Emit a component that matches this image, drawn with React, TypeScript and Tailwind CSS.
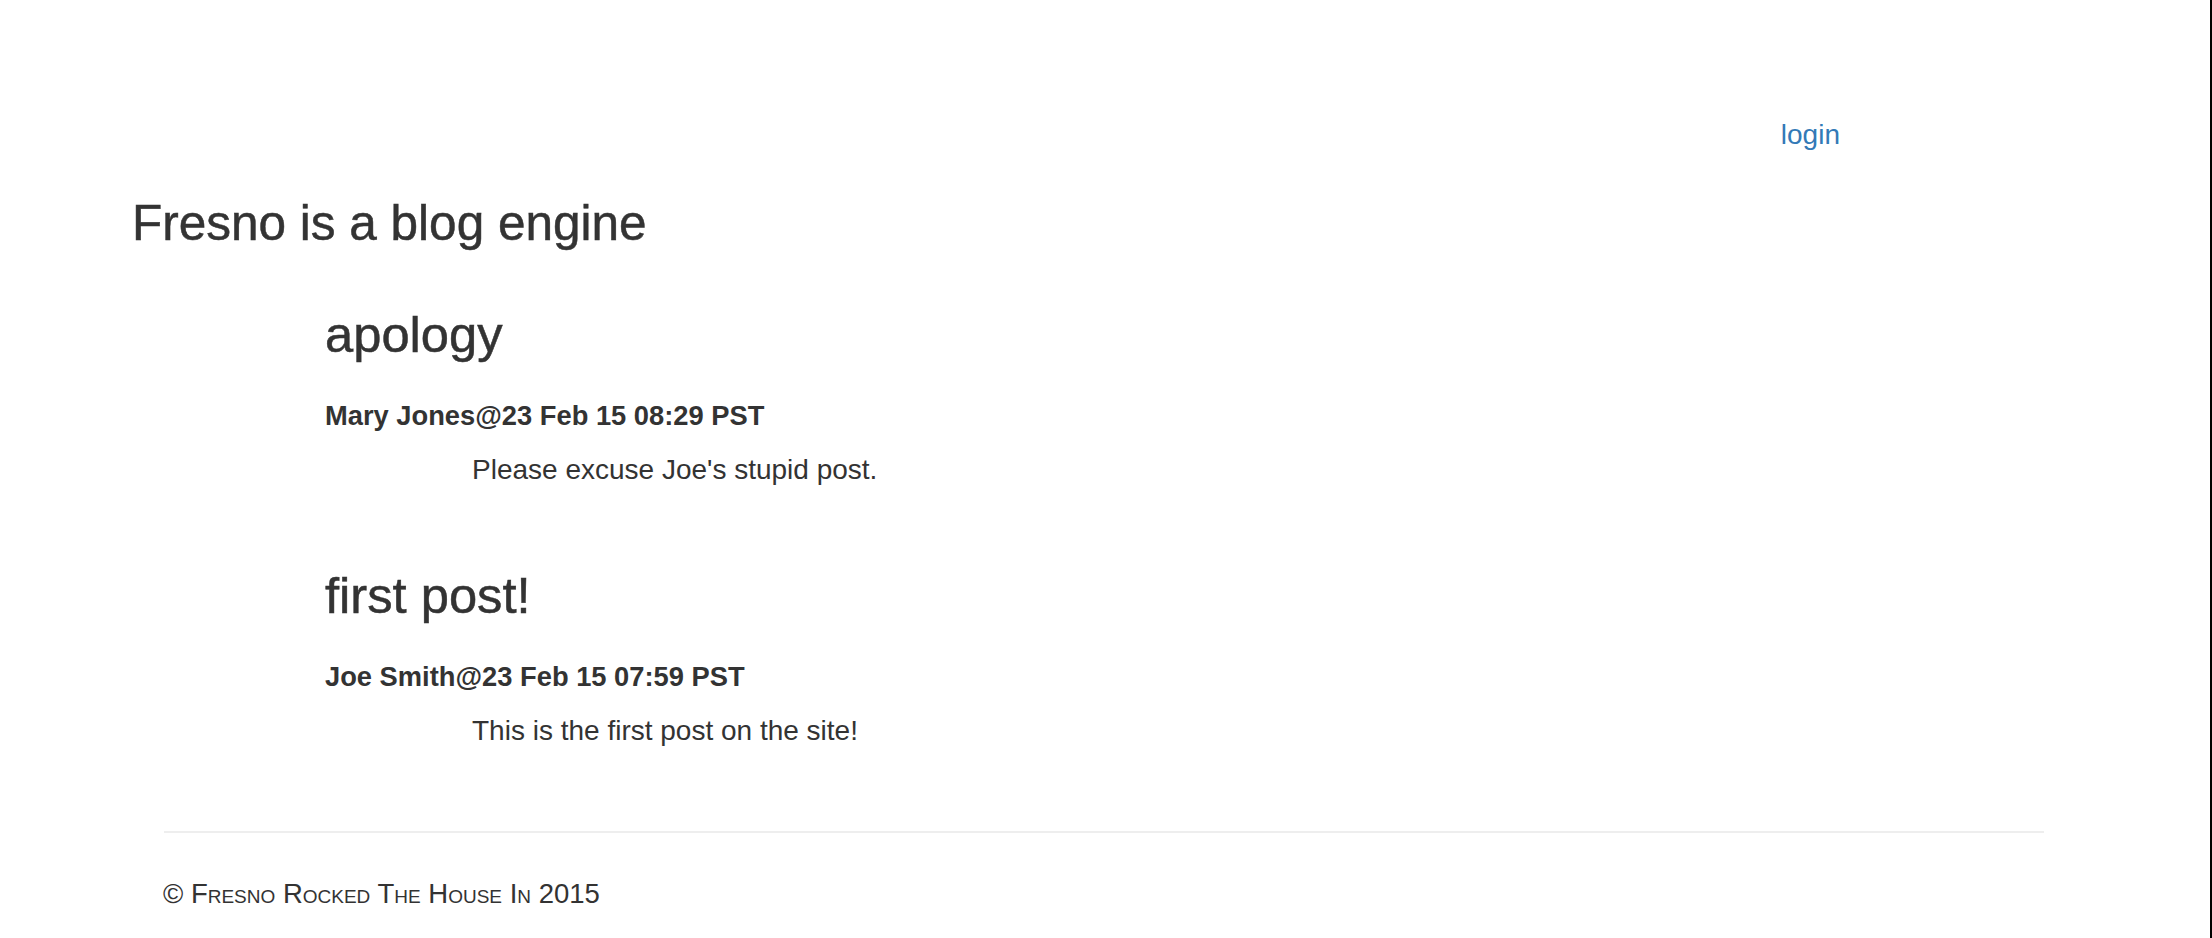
const posts = [
  {
    title: 'apology',
    author: 'Mary Jones',
    date: '23 Feb 15 08:29 PST',
    body: "Please excuse Joe's stupid post.",
    gap: 'mt-[52px]',
  },
  {
    title: 'first post!',
    author: 'Joe Smith',
    date: '23 Feb 15 07:59 PST',
    body: 'This is the first post on the site!',
    gap: 'mt-[76px]',
  },
]

export default function App() {
  return (
    <div className="h-[938px] w-full border-r-2 border-black bg-white font-['Liberation_Sans',Arial,sans-serif] text-[#333]">
      <div className="flex justify-end pt-[115px] pr-[370px]">
        <a href="#" className="text-[28px] leading-[40px] text-[#337ab7]">
          login
        </a>
      </div>

      <h1 className="mt-[38px] ml-[132px] text-[49.5px] leading-[60px] [-webkit-text-stroke:0.5px_#333]">
        Fresno is a blog engine
      </h1>

      {posts.map((post) => (
        <div key={post.title} className={post.gap + ' ml-[325px]'}>
          <h2 className="text-[50.7px] leading-[60px] [-webkit-text-stroke:0.5px_#333]">{post.title}</h2>
          <h5 className="mt-[31px] text-[27.3px] font-bold leading-[40px]">
            {post.author}@{post.date}
          </h5>
          <p className="mt-[14px] ml-[147px] text-[28px] leading-[40px]">{post.body}</p>
        </div>
      ))}

      <hr className="mt-[80px] ml-[164px] w-[1880px] border-t-2 border-[#eee]" />

      <footer className="mt-[41px] ml-[163px] text-[27.5px] leading-[40px] [font-variant:small-caps]">
        &copy; Fresno Rocked The House In 2015
      </footer>
    </div>
  )
}
